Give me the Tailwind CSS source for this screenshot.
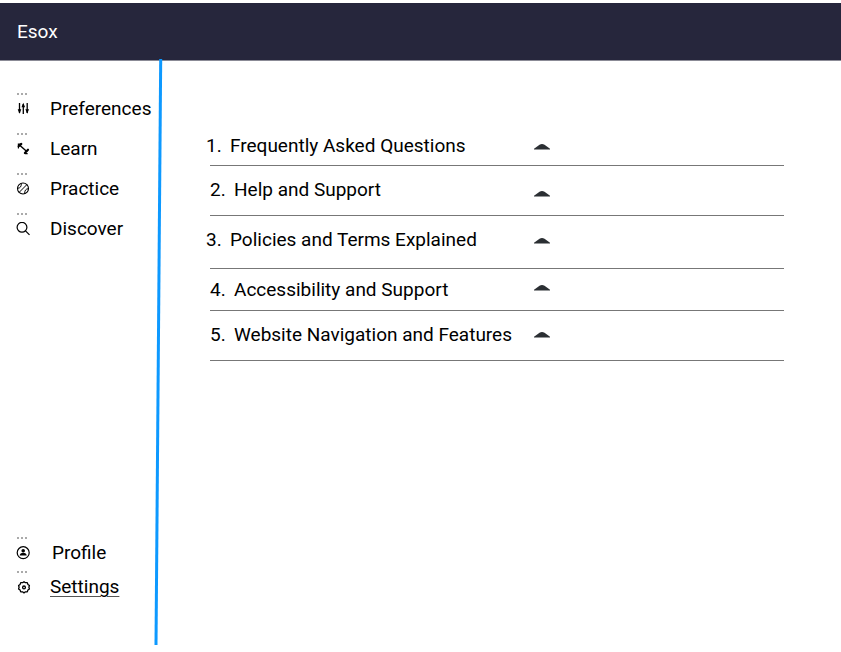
<!DOCTYPE html>
<html lang="en">
<head>
<meta charset="utf-8">
<meta name="viewport" content="width=device-width, initial-scale=1">
<title>Esox</title>
<script src="https://cdn.jsdelivr.net/npm/@tailwindcss/browser@4"></script>
</head>
<body class="flex min-h-screen flex-col bg-white pt-[3px] font-['Roboto',sans-serif] text-[19px] leading-6 text-black">
  <header class="flex items-center border-b border-[#8b8b96] bg-[#26263c] px-[17px] pt-[17px] pb-4 text-white">
    <h1>Esox</h1>
  </header>
  <div class="relative flex flex-1">
    <svg class="pointer-events-none absolute -top-0.5 left-[154px] h-[586px] w-[9px]" viewBox="0 0 9 586" preserveAspectRatio="none" aria-hidden="true"><path d="M6.700 0L2 586" stroke="#0d99ff" stroke-width="3" fill="none"/></svg>
    <nav class="flex w-40 shrink-0 flex-col justify-between pt-[26px] pb-[53px] pl-4" aria-label="Main">
      <ul>
        <li class="h-10">
          <a href="#preferences" class="flex items-end whitespace-nowrap">
            <span class="flex h-[34px] w-[34px] flex-col gap-[7px] pt-1.5">
              <svg class="h-0.5 w-3" viewBox="0 0 12 2" fill="#aaa" aria-hidden="true"><path d="M1 0h2v2H1zM5 0h2v2H5zM9 0h2v2H9z"/></svg>
              <svg class="h-[14px] w-[14px]" viewBox="0 0 14 14" fill="#000" stroke="#000" stroke-width="1.300" aria-hidden="true"><path d="M3.500 1v10M7.300 2v10M11.200 1v10"/><path stroke="none" d="M1.700 7.200h3.600L3.500 11.800zM5.500 5.200h3.600L7.300.8zM9.400 7.200h3.600L11.200 11.800z"/></svg>
            </span>
            <span>Preferences</span>
          </a>
        </li>
        <li class="h-10">
          <a href="#learn" class="flex items-end whitespace-nowrap">
            <span class="flex h-[34px] w-[34px] flex-col gap-[7px] pt-1.5">
              <svg class="h-0.5 w-3" viewBox="0 0 12 2" fill="#aaa" aria-hidden="true"><path d="M1 0h2v2H1zM5 0h2v2H5zM9 0h2v2H9z"/></svg>
              <svg class="h-[14px] w-[14px]" viewBox="0 0 14 14" fill="none" stroke="#000" stroke-linecap="round" aria-hidden="true"><path stroke-width="1.400" d="M4 3.500l6.500 5.700"/><path stroke-width="2.200" d="M2.700 4.300L5.300 1.900M8.900 10.900L12 7.700"/><path stroke-width="1.200" d="M2.400 6V2.200h2M9.300 11.700h1.900"/></svg>
            </span>
            <span>Learn</span>
          </a>
        </li>
        <li class="h-10">
          <a href="#practice" class="flex items-end whitespace-nowrap">
            <span class="flex h-[34px] w-[34px] flex-col gap-[7px] pt-1.5">
              <svg class="h-0.5 w-3" viewBox="0 0 12 2" fill="#aaa" aria-hidden="true"><path d="M1 0h2v2H1zM5 0h2v2H5zM9 0h2v2H9z"/></svg>
              <svg class="h-[14px] w-[14px]" viewBox="0 0 14 14" fill="none" stroke="#000" stroke-width="1.100" aria-hidden="true"><circle cx="7" cy="6.500" r="5.500"/><path stroke-width="1" d="M3.100 10.400L10.900 2.600M1.500 6.300Q5.600 6.200 5.300 1.200M12.500 6.700Q8.400 6.800 8.700 11.800"/></svg>
            </span>
            <span>Practice</span>
          </a>
        </li>
        <li class="h-10">
          <a href="#discover" class="flex items-end whitespace-nowrap">
            <span class="flex h-[34px] w-[34px] flex-col gap-[7px] pt-1.5">
              <svg class="h-0.5 w-3" viewBox="0 0 12 2" fill="#aaa" aria-hidden="true"><path d="M1 0h2v2H1zM5 0h2v2H5zM9 0h2v2H9z"/></svg>
              <svg class="h-[14px] w-[14px]" viewBox="0 0 14 14" fill="none" stroke="#000" stroke-width="1.200" aria-hidden="true"><circle cx="6" cy="5.300" r="4.900"/><path d="M9.500 8.800L13.500 12.800"/></svg>
            </span>
            <span>Discover</span>
          </a>
        </li>
      </ul>
      <ul>
        <li>
          <a href="#profile" class="flex items-end whitespace-nowrap">
            <span class="flex h-[34px] w-9 flex-col gap-[7px] pt-1.5">
              <svg class="h-0.5 w-3" viewBox="0 0 12 2" fill="#aaa" aria-hidden="true"><path d="M1 0h2v2H1zM5 0h2v2H5zM9 0h2v2H9z"/></svg>
              <svg class="h-[14px] w-[14px]" viewBox="0 0 14 14" fill="none" stroke="#000" stroke-width="1.200" aria-hidden="true"><circle cx="7.200" cy="6.700" r="6"/><circle cx="7.200" cy="4.700" r="1.800" fill="#000" stroke="none"/><path fill="#000" stroke="none" d="M3.700 9.600c0-1.900 1.500-2.900 3.500-2.900s3.500 1 3.500 2.900z"/></svg>
            </span>
            <span>Profile</span>
          </a>
        </li>
        <li>
          <a href="#settings" aria-current="page" class="flex items-end whitespace-nowrap">
            <span class="flex h-[34px] w-[34px] flex-col gap-[7px] pt-1.5">
              <svg class="h-0.5 w-3" viewBox="0 0 12 2" fill="#aaa" aria-hidden="true"><path d="M1 0h2v2H1zM5 0h2v2H5zM9 0h2v2H9z"/></svg>
              <svg class="h-[14px] w-4" viewBox="0 0 16 14" fill="none" stroke="#000" stroke-width="1.300" stroke-linejoin="round" aria-hidden="true"><path d="M6.600 2.700L8 1.700l1.400 1 1.900 0 .6 1.700 1.500 1.200L12.900 7.300l.5 1.700-1.500 1.100-.6 1.700-1.900 0L8 12.900l-1.400-1.100-1.900 0-.6-1.700-1.500-1.100.5-1.700-.5-1.700 1.500-1.200.6-1.700z"/><circle cx="8" cy="7.400" r="1.400"/></svg>
            </span>
            <span class="underline decoration-[#555] decoration-1 underline-offset-3">Settings</span>
          </a>
        </li>
      </ul>
    </nav>
    <main class="grid flex-1 content-start pt-[62px] pr-[57px] pl-[50px]">
      <ol class="col-start-1 row-start-1 whitespace-nowrap">
        <li id="q1" class="flex h-[43px] items-start border-b border-[#777] pt-[11px]"><span class="-ml-1 w-6">1.</span><span>Frequently Asked Questions</span></li>
        <li id="q2" class="flex h-[50px] items-start border-b border-[#777] pt-3"><span class="w-6">2.</span><span>Help and Support</span></li>
        <li id="q3" class="flex h-[53px] items-start border-b border-[#777] pt-3"><span class="-ml-1 w-6">3.</span><span>Policies and Terms Explained</span></li>
        <li id="q4" class="flex h-[42px] items-start border-b border-[#777] pt-[9px]"><span class="w-6">4.</span><span>Accessibility and Support</span></li>
        <li id="q5" class="flex h-[50px] items-start border-b border-[#777] pt-3"><span class="w-6">5.</span><span>Website Navigation and Features</span></li>
      </ol>
      <div class="col-start-1 row-start-1 ml-[324px] flex w-4 flex-col">
        <button type="button" aria-controls="q1" aria-label="Toggle Frequently Asked Questions" class="flex h-[47px] items-center"><svg class="h-1.5 w-4" viewBox="0 0 16 6" fill="#2b2f33" aria-hidden="true"><path d="M0 5.500V4.800L5.500.8Q8-.8 10.500.8L16 4.800V5.500z"/></svg></button>
        <button type="button" aria-controls="q2" aria-label="Toggle Help and Support" class="flex h-[47px] items-center"><svg class="h-1.5 w-4" viewBox="0 0 16 6" fill="#2b2f33" aria-hidden="true"><path d="M0 5.500V4.800L5.500.8Q8-.8 10.500.8L16 4.800V5.500z"/></svg></button>
        <button type="button" aria-controls="q3" aria-label="Toggle Policies and Terms Explained" class="flex h-[47px] items-center"><svg class="h-1.5 w-4" viewBox="0 0 16 6" fill="#2b2f33" aria-hidden="true"><path d="M0 5.500V4.800L5.500.8Q8-.8 10.500.8L16 4.800V5.500z"/></svg></button>
        <button type="button" aria-controls="q4" aria-label="Toggle Accessibility and Support" class="flex h-[47px] items-center"><svg class="h-1.5 w-4" viewBox="0 0 16 6" fill="#2b2f33" aria-hidden="true"><path d="M0 5.500V4.800L5.500.8Q8-.8 10.500.8L16 4.800V5.500z"/></svg></button>
        <button type="button" aria-controls="q5" aria-label="Toggle Website Navigation and Features" class="flex h-[47px] items-center"><svg class="h-1.5 w-4" viewBox="0 0 16 6" fill="#2b2f33" aria-hidden="true"><path d="M0 5.500V4.800L5.500.8Q8-.8 10.500.8L16 4.800V5.500z"/></svg></button>
      </div>
    </main>
  </div>
</body>
</html>
